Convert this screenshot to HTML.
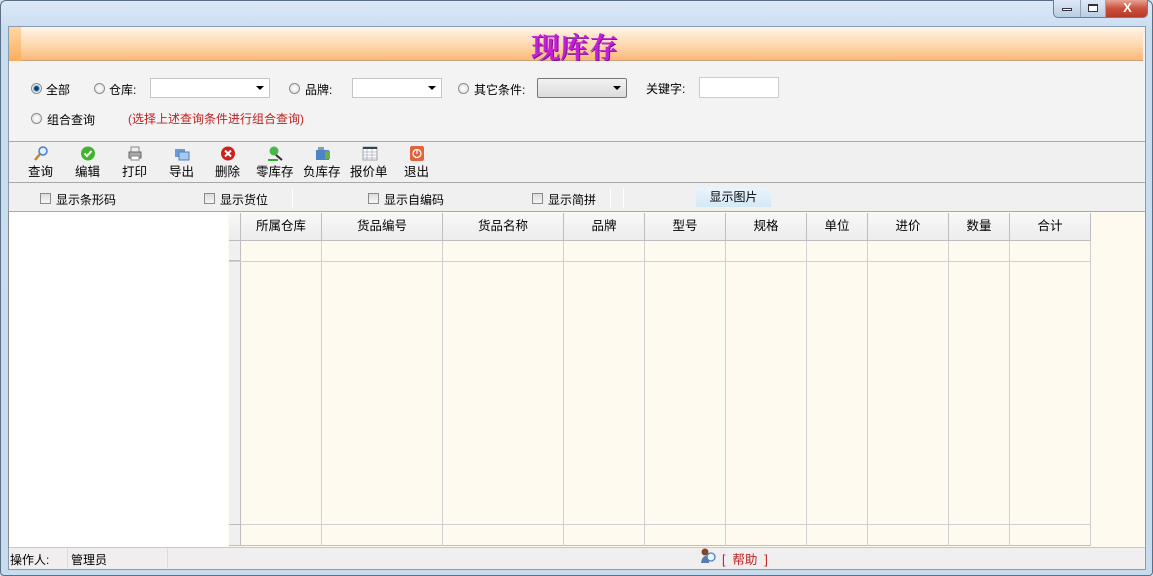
<!DOCTYPE html>
<html><head><meta charset="utf-8">
<style>
*{margin:0;padding:0;box-sizing:border-box}
body{width:1153px;height:576px;overflow:hidden;font-family:"Liberation Sans","Noto Sans CJK SC","WenQuanYi Zen Hei",sans-serif;font-size:12px;color:#000;position:relative;background:#cfe0f1}
.a{position:absolute}
.frame{left:0;top:0;width:1153px;height:576px;background:linear-gradient(#dbe9f7,#c9ddf1 30px,#c8dcf0);border:1px solid #5a6f86;border-radius:6px 6px 4px 4px}
.client{left:8px;top:26px;width:1138px;height:544px;background:#f0f0f0;border:1px solid #8a9bb0}
.hdr{left:9px;top:27px;width:1134px;height:34px;background:linear-gradient(#fff4e8,#fdd5a9 60%,#fbb878);border-bottom:1px solid #c7a37c}
.acc{left:9px;top:27px;width:12px;height:34px;background:linear-gradient(#ffd7a6,#f9ae5c)}
.title{left:531px;top:26px;font-size:29px;font-weight:bold;color:#c21fd6;font-family:"Noto Serif CJK SC","Noto Sans CJK SC",serif;text-shadow:1px 1px 0 #7a1290;letter-spacing:0}
.radio{width:11px;height:11px;border:1px solid #8b8b8b;border-radius:50%;background:radial-gradient(#fff,#ddd)}
.radio.on{background:radial-gradient(#0d3f6e 30%,#7fb0d8 45%,#eee 60%)}
.cb{width:11px;height:11px;border:1px solid #8b8b8b;background:linear-gradient(#dcdcdc,#f6f6f6)}
.combo{height:20px;background:#fff;border:1px solid #c5c5c5}
.combo:after{content:"";position:absolute;right:5px;top:7px;border-left:4px solid transparent;border-right:4px solid transparent;border-top:4px solid #000}
.tb{top:161px;font-size:12.5px}
.ic{top:146px;width:16px;height:15px}
.grid{left:228px;top:212px;width:917px;height:335px;background:#fffaf0}
.vl{width:1px;background:#cfcfcf}
.hl{height:1px;background:#cfcfcf}
.th{top:213px;height:28px;background:linear-gradient(#f8f8f8,#ececec);border-right:1px solid #bdbdbd;border-bottom:1px solid #bdbdbd;text-align:center;line-height:26px;font-size:12.5px}
</style></head><body>
<div class="a frame"></div>
<div class="a" style="left:1053px;top:0;width:95px;height:18px;border:1px solid #6b7f96;border-top:none;border-radius:0 0 5px 5px;background:linear-gradient(#dfe9f5,#b9cde3);overflow:hidden">
 <div class="a" style="left:0;top:0;width:27px;height:17px;border-right:1px solid #8fa4bb"><div class="a" style="left:8px;top:8px;width:10px;height:3px;border:1px solid #334;background:#fff"></div></div>
 <div class="a" style="left:27px;top:0;width:25px;height:17px;border-right:1px solid #8fa4bb"><div class="a" style="left:7px;top:4px;width:10px;height:8px;border:1px solid #334;border-top-width:2px;background:#fff"></div></div>
 <div class="a" style="left:52px;top:0;width:43px;height:17px;background:linear-gradient(#e8a395,#c9503d 50%,#b83a28);color:#fff;font-weight:bold;text-align:center;line-height:16px;font-size:13px">X</div>
</div>
<div class="a client"></div>
<div class="a hdr"></div>
<div class="a acc"></div>
<div class="a title">现库存</div>
<div class="a" style="left:9px;top:61px;width:1136px;height:81px;background:#f3f3f3;border-bottom:1px solid #a8a8a8"></div>
<div class="a radio on" style="left:31px;top:83px"></div><div class="a" style="left:46px;top:81px">全部</div>
<div class="a radio" style="left:94px;top:83px"></div><div class="a" style="left:109px;top:81px">仓库:</div>
<div class="a combo" style="left:150px;top:78px;width:120px"></div>
<div class="a radio" style="left:289px;top:83px"></div><div class="a" style="left:305px;top:81px">品牌:</div>
<div class="a combo" style="left:352px;top:78px;width:90px"></div>
<div class="a radio" style="left:458px;top:83px"></div><div class="a" style="left:474px;top:81px">其它条件:</div>
<div class="a combo" style="left:537px;top:78px;width:90px;background:linear-gradient(#f2f2f2,#dcdcdc);border-color:#777;border-radius:2px"></div>
<div class="a" style="left:646px;top:80px">关键字:</div>
<div class="a" style="left:699px;top:77px;width:80px;height:21px;background:#fff;border:1px solid #ccc"></div>
<div class="a radio" style="left:31px;top:113px"></div><div class="a" style="left:47px;top:111px">组合查询</div>
<div class="a" style="left:128px;top:110px;color:#c02020">(选择上述查询条件进行组合查询)</div>
<div class="a" style="left:9px;top:182px;width:1136px;height:1px;background:#a8a8a8"></div>
<svg class="a ic" style="left:33px" viewBox="0 0 16 15"><circle cx="10" cy="5" r="4" fill="#dfefff" stroke="#4a7fbf" stroke-width="1.5"/><path d="M7 8 L2 14" stroke="#c0843a" stroke-width="2.5"/></svg>
<div class="a tb" style="left:28px">查询</div>
<svg class="a ic" style="left:80px" viewBox="0 0 16 15"><circle cx="8" cy="7.5" r="7" fill="#3fb52d"/><path d="M4.5 7.5 L7 10 L11.5 5" stroke="#fff" stroke-width="2" fill="none"/></svg>
<div class="a tb" style="left:75px">编辑</div>
<svg class="a ic" style="left:127px" viewBox="0 0 16 15"><rect x="4" y="1" width="8" height="5" fill="#eee" stroke="#888"/><rect x="2" y="6" width="12" height="6" fill="#aaa" stroke="#666"/><rect x="4" y="10" width="8" height="4" fill="#fff" stroke="#888"/></svg>
<div class="a tb" style="left:122px">打印</div>
<svg class="a ic" style="left:174px" viewBox="0 0 16 15"><rect x="1" y="3" width="10" height="8" fill="#6a9ad6"/><rect x="5" y="6" width="10" height="8" fill="#a8c8ee" stroke="#4a7fbf"/></svg>
<div class="a tb" style="left:169px">导出</div>
<svg class="a ic" style="left:220px" viewBox="0 0 16 15"><circle cx="8" cy="7.5" r="7" fill="#d0201c"/><path d="M5 4.5 L11 10.5 M11 4.5 L5 10.5" stroke="#fff" stroke-width="2"/></svg>
<div class="a tb" style="left:215px">删除</div>
<svg class="a ic" style="left:268px" viewBox="0 0 16 15"><circle cx="6" cy="5" r="4.5" fill="#49b84a"/><path d="M8 9 L14 14" stroke="#2a2a2a" stroke-width="2"/><path d="M0 14 H10" stroke="#3a3" stroke-width="2"/></svg>
<div class="a tb" style="left:256px">零库存</div>
<svg class="a ic" style="left:315px" viewBox="0 0 16 15"><rect x="1" y="4" width="13" height="10" fill="#4a86c6"/><rect x="10" y="5" width="5" height="8" fill="#6bb04a"/><rect x="3" y="1" width="6" height="3" fill="#999"/></svg>
<div class="a tb" style="left:303px">负库存</div>
<svg class="a ic" style="left:362px" viewBox="0 0 16 15"><rect x="1" y="1" width="14" height="13" fill="#fff" stroke="#9aa"/><rect x="1" y="1" width="14" height="2" fill="#345"/><path d="M1 6H15M1 9H15M1 12H15M5 3V14M10 3V14" stroke="#aab" stroke-width=".7"/></svg>
<div class="a tb" style="left:350px">报价单</div>
<svg class="a ic" style="left:409px" viewBox="0 0 16 15"><rect x="1" y="0" width="14" height="15" rx="2" fill="#e0643c"/><circle cx="8" cy="7.5" r="4" fill="none" stroke="#fff" stroke-width="1.2"/><path d="M8 3V8" stroke="#fff" stroke-width="1.2"/></svg>
<div class="a tb" style="left:404px">退出</div>
<div class="a cb" style="left:40px;top:193px"></div><div class="a" style="left:56px;top:191px">显示条形码</div>
<div class="a cb" style="left:204px;top:193px"></div><div class="a" style="left:220px;top:191px">显示货位</div>
<div class="a" style="left:292px;top:188px;width:1px;height:20px;background:#fff"></div>
<div class="a cb" style="left:368px;top:193px"></div><div class="a" style="left:384px;top:191px">显示自编码</div>
<div class="a cb" style="left:532px;top:193px"></div><div class="a" style="left:548px;top:191px">显示简拼</div>
<div class="a" style="left:610px;top:188px;width:14px;height:20px;border-left:1px solid #fff;border-right:1px solid #fff"></div>
<div class="a" style="left:696px;top:188px;width:75px;height:19px;background:linear-gradient(#eaf4fb,#d4e8f6);text-align:center;line-height:19px">显示图片</div>
<div class="a" style="left:9px;top:211px;width:1136px;height:1px;background:#a8a8a8"></div>
<div class="a" style="left:8px;top:212px;width:221px;height:336px;background:#fff;border:1px solid #8a8a8a;border-top:none"></div>
<div class="a grid"></div>
<div class="a" style="left:229px;top:213px;width:12px;height:333px;background:#f0f0f0;border-right:1px solid #bdbdbd"></div>
<div class="a hl" style="left:229px;top:261px;width:862px"></div>
<div class="a hl" style="left:229px;top:524px;width:862px"></div>
<div class="a" style="left:229px;top:545px;width:862px;height:1px;background:#bdbdbd"></div>
<div class="a vl" style="left:321px;top:241px;height:305px"></div>
<div class="a vl" style="left:442px;top:241px;height:305px"></div>
<div class="a vl" style="left:563px;top:241px;height:305px"></div>
<div class="a vl" style="left:644px;top:241px;height:305px"></div>
<div class="a vl" style="left:725px;top:241px;height:305px"></div>
<div class="a vl" style="left:806px;top:241px;height:305px"></div>
<div class="a vl" style="left:867px;top:241px;height:305px"></div>
<div class="a vl" style="left:948px;top:241px;height:305px"></div>
<div class="a vl" style="left:1009px;top:241px;height:305px"></div>
<div class="a vl" style="left:1090px;top:241px;height:305px"></div>
<div class="a" style="left:229px;top:241px;width:12px;height:20px;border-bottom:1px solid #bdbdbd"></div>
<div class="a" style="left:229px;top:524px;width:12px;height:1px;background:#bdbdbd"></div>
<div class="a th" style="left:229px;width:12px"></div>
<div class="a th" style="left:241px;width:81px">所属仓库</div>
<div class="a th" style="left:322px;width:121px">货品编号</div>
<div class="a th" style="left:443px;width:121px">货品名称</div>
<div class="a th" style="left:564px;width:81px">品牌</div>
<div class="a th" style="left:645px;width:81px">型号</div>
<div class="a th" style="left:726px;width:81px">规格</div>
<div class="a th" style="left:807px;width:61px">单位</div>
<div class="a th" style="left:868px;width:81px">进价</div>
<div class="a th" style="left:949px;width:61px">数量</div>
<div class="a th" style="left:1010px;width:81px">合计</div>
<div class="a" style="left:9px;top:547px;width:1136px;height:22px;background:#f0eeee;border-top:1px solid #c8c8c8"></div>
<div class="a" style="left:10px;top:551px">操作人:</div>
<div class="a" style="left:67px;top:548px;width:1px;height:20px;background:#ddd"></div>
<div class="a" style="left:71px;top:551px">管理员</div>
<div class="a" style="left:167px;top:548px;width:1px;height:20px;background:#ddd"></div>
<svg class="a" style="left:700px;top:548px" width="18" height="16" viewBox="0 0 18 16"><circle cx="5" cy="4" r="3.5" fill="#7a4a2a"/><path d="M1 15 Q2 8 6 8 Q9 8 9 15Z" fill="#5a7ab0"/><circle cx="11" cy="9" r="4" fill="#e8f4ff" stroke="#4a80c0" stroke-width="1.3"/></svg>
<div class="a" style="left:722px;top:549px;color:#c02020;font-size:12.5px">[&nbsp; 帮助 &nbsp;]</div>
</body></html>
